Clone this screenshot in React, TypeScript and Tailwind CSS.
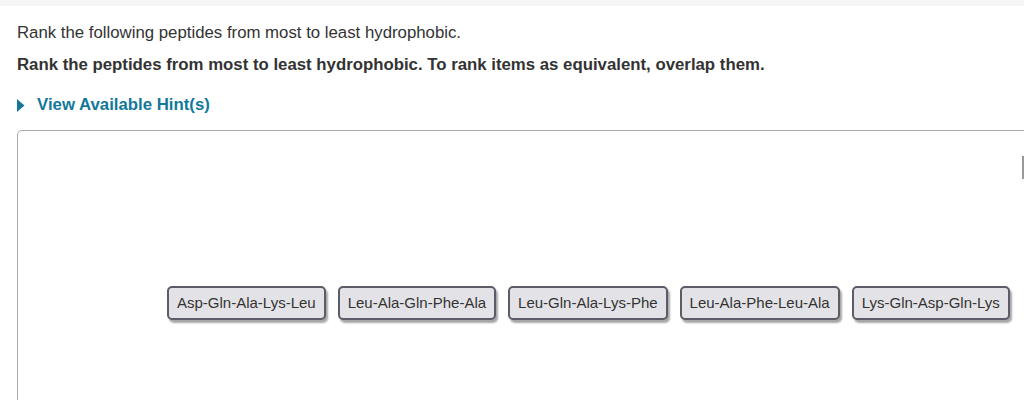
import React from "react";

const peptides = [
  "Asp-Gln-Ala-Lys-Leu",
  "Leu-Ala-Gln-Phe-Ala",
  "Leu-Gln-Ala-Lys-Phe",
  "Leu-Ala-Phe-Leu-Ala",
  "Lys-Gln-Asp-Gln-Lys",
];

export default function App() {
  return (
    <div className="w-[1024px] h-[400px] overflow-hidden bg-white text-[#333] font-['Liberation_Sans',Arial,sans-serif]">
      <div className="h-[6px] bg-[#f5f5f5]" />
      <div className="pl-[17px]">
        <p className="mt-[16px] text-[16.8px] leading-[22px]">
          Rank the following peptides from most to least hydrophobic.
        </p>
        <p className="mt-[10px] text-[16.8px] leading-[22px] font-bold">
          Rank the peptides from most to least hydrophobic. To rank items as equivalent, overlap them.
        </p>
        <div className="mt-[18px] flex items-center text-[#13789a] font-bold text-[16.8px] leading-[22px]">
          <svg width="8" height="13" viewBox="0 0 8 13" className="mr-[12px]">
            <path d="M0 0 L7.5 6.5 L0 13 Z" fill="#13789a" />
          </svg>
          <span>View Available Hint(s)</span>
        </div>
        <div className="mt-[14px] relative h-[400px] w-[1100px] border border-[#aaa] rounded-tl-[5px]">
          <div className="absolute left-[1004px] top-[25px] w-[2px] h-[23px] bg-[#999]" />
          <div className="pt-[155px] pl-[149px] flex gap-[12px]">
            {peptides.map((p) => (
              <div
                key={p}
                className="h-[34px] px-[8px] flex items-center border-2 border-[#5c5c68] rounded-[5px] bg-[#e3e3e7] text-[15px] text-[#333] shadow-[2px_3px_2px_rgba(0,0,0,0.35)]"
              >
                {p}
              </div>
            ))}
          </div>
        </div>
      </div>
    </div>
  );
}
